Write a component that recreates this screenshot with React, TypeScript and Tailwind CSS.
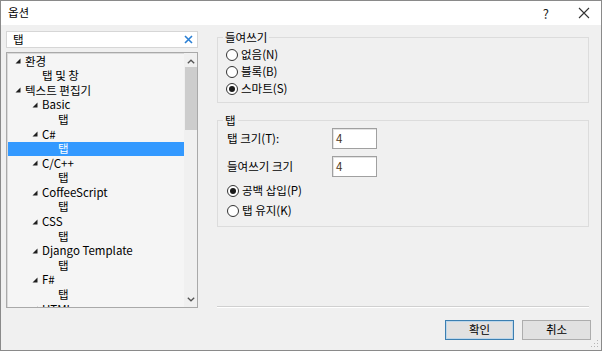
import React from 'react';

type Row = { label: string; level: number; expander?: boolean; selected?: boolean };

const rows: Row[] = [
  { label: '환경', level: 0, expander: true },
  { label: '탭 및 창', level: 1 },
  { label: '텍스트 편집기', level: 0, expander: true },
  { label: 'Basic', level: 1, expander: true },
  { label: '탭', level: 2 },
  { label: 'C#', level: 1, expander: true },
  { label: '탭', level: 2, selected: true },
  { label: 'C/C++', level: 1, expander: true },
  { label: '탭', level: 2 },
  { label: 'CoffeeScript', level: 1, expander: true },
  { label: '탭', level: 2 },
  { label: 'CSS', level: 1, expander: true },
  { label: '탭', level: 2 },
  { label: 'Django Template', level: 1, expander: true },
  { label: '탭', level: 2 },
  { label: 'F#', level: 1, expander: true },
  { label: '탭', level: 2 },
  { label: 'HTML', level: 1, expander: true },
];

const indent = ['pl-[7px]', 'pl-[24px]', 'pl-[40px]'];

function Expander() {
  return (
    <svg width="10" height="6" viewBox="0 0 10 6" className="shrink-0">
      <polygon points="5.5,0.5 5.5,5.5 0.5,5.5" fill="#1e1e1e" />
    </svg>
  );
}

function TreeRow({ row }: { row: Row }) {
  return (
    <div
      className={`flex h-[14.6px] shrink-0 items-center ${indent[row.level]} ${
        row.selected ? 'bg-[#3399ff] text-white' : 'text-black'
      }`}
    >
      <div className="flex w-[10px] shrink-0 items-center">{row.expander && <Expander />}</div>
      <span className="whitespace-nowrap leading-none">{row.label}</span>
    </div>
  );
}

function Radio({ label, checked }: { label: string; checked?: boolean }) {
  return (
    <div className="flex items-center gap-[3px]">
      <div className="flex h-[12px] w-[12px] items-center justify-center rounded-full border border-[#333] bg-white">
        {checked && <div className="h-[6px] w-[6px] rounded-full bg-[#1a1a1a]" />}
      </div>
      <span className="leading-none">{label}</span>
    </div>
  );
}

function NumberBox({ value }: { value: string }) {
  return (
    <div className="flex h-[21px] w-[45px] items-center border border-[#a0a0a0] bg-white pl-[3px] text-[#4b3520] shadow-[inset_1px_1px_0_#e3e3e3]">
      {value}
    </div>
  );
}

export default function App() {
  return (
    <div className="flex h-[351px] w-[602px] flex-col border border-[#8a8a8a] bg-[#f0f0f0] text-[11.5px] text-black font-['Noto_Sans_CJK_KR','Noto_Sans',sans-serif]">
      {/* title bar */}
      <div className="flex h-[24px] shrink-0 items-center bg-white pl-[7px]">
        <span className="leading-none">옵션</span>
        <span className="ml-auto mr-[29px] text-[13px] leading-none text-[#222]">?</span>
        <svg width="12" height="12" viewBox="0 0 12 12" className="mr-[11px]">
          <path d="M1 1 L11 11 M11 1 L1 11" stroke="#333" strokeWidth="1.1" />
        </svg>
      </div>

      <div className="flex min-h-0 flex-1">
        {/* left column */}
        <div className="flex w-[197px] shrink-0 flex-col pl-[5px] pt-[6px]">
          <div className="flex h-[17px] items-center border border-[#d6d6d6] bg-white pl-[6px] pr-[4px]">
            <span className="leading-none">탭</span>
            <svg width="9" height="9" viewBox="0 0 9 9" className="ml-auto">
              <path d="M1 1 L8 8 M8 1 L1 8" stroke="#2a7fd4" strokeWidth="1.6" />
            </svg>
          </div>
          <div className="mt-[4px] flex h-[256px] border border-[#a9a9a9] bg-[#f5f5f5] shadow-[inset_1px_1px_0_#dadada]">
            <div className="flex min-w-0 flex-1 flex-col overflow-hidden pl-[1px] pt-[1px]">
              {rows.map((r, i) => (
                <TreeRow key={i} row={r} />
              ))}
            </div>
            <div className="flex w-[13px] shrink-0 flex-col items-center bg-[#f0f0f0]">
              <svg width="8" height="5" viewBox="0 0 8 5" className="mt-[6px]">
                <path d="M0.8 4.2 L4 1.2 L7.2 4.2" stroke="#555" strokeWidth="1.3" fill="none" />
              </svg>
              <div className="mt-[3px] h-[63px] w-[12px] bg-[#cdcdcd]" />
              <svg width="8" height="5" viewBox="0 0 8 5" className="mb-[5px] mt-auto">
                <path d="M0.8 0.8 L4 3.8 L7.2 0.8" stroke="#555" strokeWidth="1.3" fill="none" />
              </svg>
            </div>
          </div>
        </div>

        {/* right column */}
        <div className="flex w-[391px] shrink-0 flex-col pl-[19px] pt-[6px]">
          <fieldset className="h-[72px] border border-[#dcdcdc]">
            <legend className="ml-[5px] px-[2px] leading-[13px]">들여쓰기</legend>
            <div className="flex flex-col gap-[5px] pl-[8px] pt-[5px]">
              <Radio label="없음(N)" />
              <Radio label="블록(B)" />
              <Radio label="스마트(S)" checked />
            </div>
          </fieldset>

          <fieldset className="mt-[11px] h-[113px] border border-[#dcdcdc]">
            <legend className="ml-[5px] px-[2px] leading-[13px]">탭</legend>
            <div className="flex flex-col pl-[9px] pt-[1px]">
              <div className="flex items-center">
                <span className="w-[105px] leading-none">탭 크기(T):</span>
                <NumberBox value="4" />
              </div>
              <div className="mt-[7px] flex items-center">
                <span className="w-[105px] leading-none">들여쓰기 크기</span>
                <NumberBox value="4" />
              </div>
              <div className="mt-[8px] flex flex-col gap-[8px]">
                <Radio label="공백 삽입(P)" checked />
                <Radio label="탭 유지(K)" />
              </div>
            </div>
          </fieldset>

          <div className="mt-[79px] h-[2px] border-t border-[#d0d0d0] bg-white" />

          <div className="mt-[12px] flex justify-end gap-[8px]">
            <div className="flex h-[20px] w-[69px] items-center justify-center border border-[#3c7fb1] bg-[#e1e1e1] leading-none shadow-[inset_0_0_0_1px_#bcd6ea]">
              확인
            </div>
            <div className="-mr-[2px] flex h-[20px] w-[69px] items-center justify-center border border-[#adadad] bg-[#e1e1e1] leading-none">
              취소
            </div>
          </div>
        </div>

        {/* size grip */}
        <div className="flex flex-1 flex-col justify-end pb-[2px] pr-[2px]">
          <svg width="8" height="8" viewBox="0 0 8 8" className="ml-auto">
            <rect x="6" y="0" width="1" height="1" fill="#b5b5b5" />
            <rect x="3" y="3" width="1" height="1" fill="#b5b5b5" />
            <rect x="6" y="3" width="1" height="1" fill="#b5b5b5" />
            <rect x="0" y="6" width="1" height="1" fill="#b5b5b5" />
            <rect x="3" y="6" width="1" height="1" fill="#b5b5b5" />
            <rect x="6" y="6" width="1" height="1" fill="#b5b5b5" />
          </svg>
        </div>
      </div>
    </div>
  );
}
